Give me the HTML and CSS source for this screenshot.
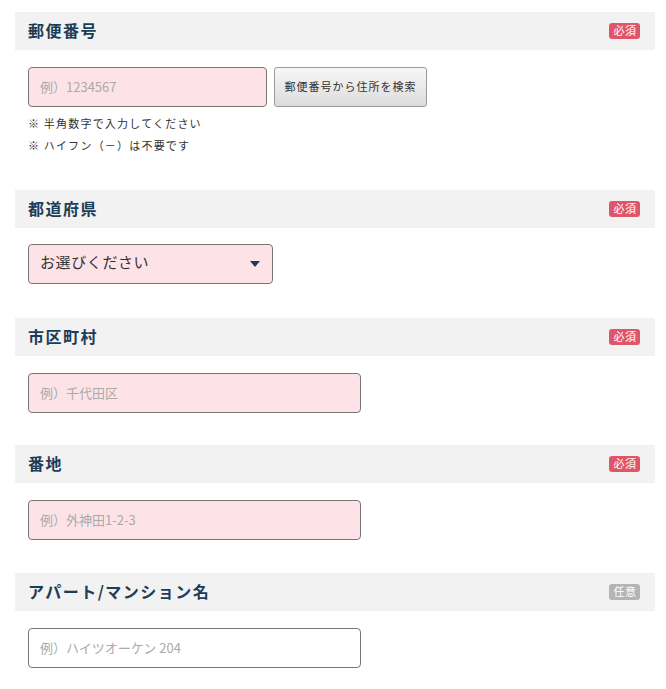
FILE: index.html
```html
<!DOCTYPE html>
<html lang="ja">
<head>
<meta charset="utf-8">
<title>住所入力</title>
<link rel="stylesheet" href="styles.css">
</head>
<body>
<form class="form">
  <section class="field field-zip">
    <div class="field-head">
      <h2 class="field-title">郵便番号</h2>
      <span class="badge badge-required">必須</span>
    </div>
    <div class="field-body">
      <div class="zip-row">
        <input class="text-input input-zip is-required" type="text" placeholder="例）1234567">
        <button class="zip-button" type="button">郵便番号から住所を検索</button>
      </div>
      <ul class="notes">
        <li>※ 半角数字で入力してください</li>
        <li>※ ハイフン（－）は不要です</li>
      </ul>
    </div>
  </section>

  <section class="field field-pref">
    <div class="field-head">
      <h2 class="field-title">都道府県</h2>
      <span class="badge badge-required">必須</span>
    </div>
    <div class="field-body">
      <div class="select-wrap">
        <select class="select-input is-required">
          <option>お選びください</option>
          <option>東京都</option>
        </select>
      </div>
    </div>
  </section>

  <section class="field field-city">
    <div class="field-head">
      <h2 class="field-title">市区町村</h2>
      <span class="badge badge-required">必須</span>
    </div>
    <div class="field-body">
      <input class="text-input input-wide is-required" type="text" placeholder="例）千代田区">
    </div>
  </section>

  <section class="field">
    <div class="field-head">
      <h2 class="field-title">番地</h2>
      <span class="badge badge-required">必須</span>
    </div>
    <div class="field-body">
      <input class="text-input input-wide is-required" type="text" placeholder="例）外神田1-2-3">
    </div>
  </section>

  <section class="field">
    <div class="field-head">
      <h2 class="field-title">アパート/マンション名</h2>
      <span class="badge badge-optional">任意</span>
    </div>
    <div class="field-body">
      <input class="text-input input-wide" type="text" placeholder="例）ハイツオーケン 204">
    </div>
  </section>
</form>
</body>
</html>
```
FILE: styles.css
```css
html, body {
  margin: 0;
  padding: 0;
  background: #ffffff;
}

body {
  font-family: "Noto Sans CJK JP", "Noto Sans", sans-serif;
  color: #333333;
}

.form {
  width: 640px;
  margin: 0 0 0 15px;
  padding-top: 12px;
}

.field {
  margin-bottom: 33px;
}

.field-zip {
  margin-bottom: 34px;
}

.field-pref {
  margin-bottom: 34px;
}

.field-city {
  margin-bottom: 32px;
}

.field-head {
  height: 38px;
  background: #f2f2f2;
  display: flex;
  align-items: center;
  justify-content: space-between;
  padding: 0 15px 0 13px;
  box-sizing: border-box;
}

.field-title {
  margin: 0 0 2px 0;
  font-size: 16px;
  font-weight: 700;
  letter-spacing: 1.5px;
  color: #1c3d58;
  line-height: 1;
}

.badge {
  display: inline-flex;
  align-items: center;
  justify-content: center;
  width: 31px;
  height: 16px;
  border-radius: 3px;
  font-size: 11px;
  letter-spacing: 0.5px;
  padding: 0 0 1px 1px;
  box-sizing: border-box;
  color: #ffffff;
  line-height: 1;
}

.badge-required {
  background: #e05669;
}

.badge-optional {
  background: #b4b4b4;
}

.field-body {
  padding: 17px 0 0 13px;
}

.field-pref .field-body {
  padding-top: 16px;
}

.zip-row {
  display: flex;
  gap: 7px;
}

.text-input {
  display: block;
  height: 40px;
  box-sizing: border-box;
  border: 1px solid #777777;
  border-radius: 4px;
  background: #ffffff;
  padding: 0 11px 2px 11px;
  font-family: "Noto Sans CJK JP", "Noto Sans", sans-serif;
  font-size: 13px;
  color: #333333;
  outline: none;
}

.text-input::placeholder {
  color: #aaaaaa;
}

.is-required {
  background: #fde3e8;
}

.input-zip {
  width: 239px;
}

.input-wide {
  width: 333px;
}

.zip-button {
  width: 153px;
  height: 40px;
  box-sizing: border-box;
  border: 1px solid #9a9a9a;
  border-radius: 3px;
  background: linear-gradient(#f7f7f7, #dcdcdc);
  font-family: "Noto Sans CJK JP", "Noto Sans", sans-serif;
  font-size: 11px;
  letter-spacing: 1px;
  color: #333333;
  padding: 0 0 2px 0;
  cursor: pointer;
}

.notes {
  list-style: none;
  margin: 5px 0 0 0;
  padding: 0;
  font-size: 11px;
  line-height: 22px;
  letter-spacing: 1.2px;
  color: #333333;
}

.select-wrap {
  position: relative;
  width: 245px;
}

.select-wrap::after {
  content: "";
  position: absolute;
  right: 13px;
  top: 17px;
  width: 0;
  height: 0;
  border-left: 5px solid transparent;
  border-right: 5px solid transparent;
  border-top: 6px solid #1c3d58;
  pointer-events: none;
}

.select-input {
  display: block;
  width: 245px;
  height: 40px;
  box-sizing: border-box;
  border: 1px solid #777777;
  border-radius: 4px;
  padding: 0 11px 5px 11px;
  -webkit-appearance: none;
  appearance: none;
  font-family: "Noto Sans CJK JP", "Noto Sans", sans-serif;
  font-size: 15px;
  letter-spacing: 0.6px;
  color: #333333;
  outline: none;
}
```
